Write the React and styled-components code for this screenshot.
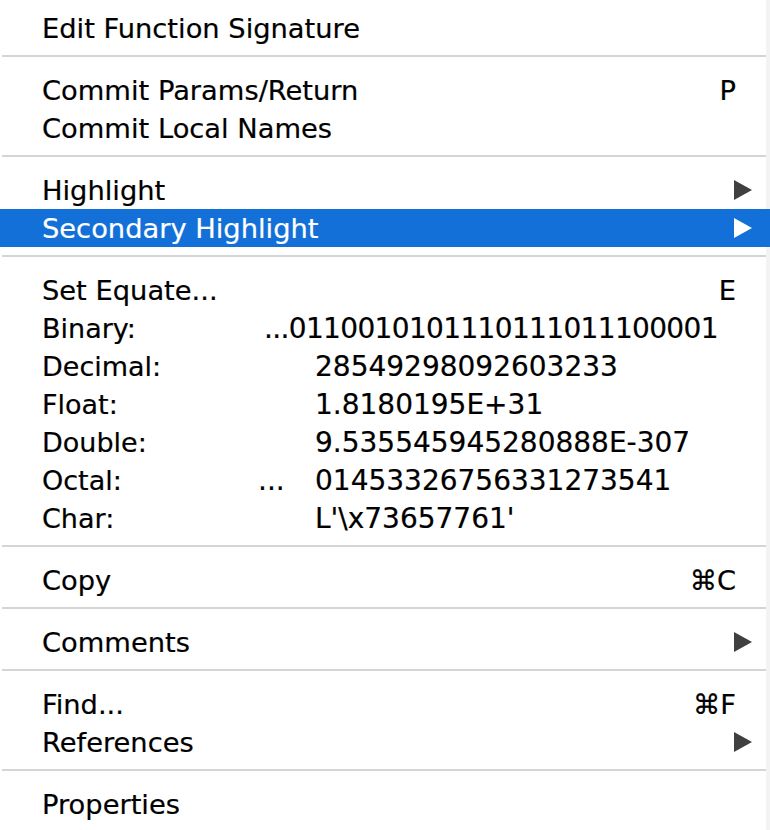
import React from "react";
import styled, { createGlobalStyle } from "styled-components";

const GlobalStyle = createGlobalStyle`
  html, body { margin: 0; padding: 0; background: #ffffff; }
  body {
    font-family: "DejaVu Sans", "Liberation Sans", sans-serif;
    -webkit-text-stroke: 0.2px currentColor;
  }
`;

const Menu = styled.div`
  min-height: 830px;
  padding-top: 9px;
  box-sizing: border-box;
  background: linear-gradient(to right, #ffffff calc(100% - 4px), #f3f3f3 0);
  color: #000;
`;

const Item = styled.div`
  display: flex;
  align-items: center;
  height: 38px;
  padding: 0 18px 0 42px;
  background: ${(p) => (p.$active ? "#1270d8" : "transparent")};
  color: ${(p) => (p.$active ? "#ffffff" : "#000000")};
  font-size: 27.3px;
  white-space: nowrap;
`;

const Label = styled.span`
  flex: 1;
`;

const Shortcut = styled.span`
  margin-right: 16px;
  font-size: 27.3px;
`;

const Arrow = styled.svg`
  width: 18px;
  height: 20px;
  display: block;
  fill: ${(p) => (p.$active ? "#ffffff" : "#404040")};
`;

const DataRow = styled.div`
  display: grid;
  grid-template-columns: 273px 1fr;
  align-items: center;
  height: 38px;
  padding-left: 42px;
  white-space: nowrap;
`;

const DataLabel = styled.span`
  font-size: 27px;
`;

const Value = styled.span`
  font-size: 28px;
  margin-left: ${(p) => p.$shift || 0}px;
  letter-spacing: ${(p) => p.$tight || 0}px;
`;

const Prefix = styled.span`
  display: inline-block;
  width: 57px;
  margin-left: -57px;
`;

const Separator = styled.div`
  height: 2px;
  margin: 8px 4px 14px 2px;
  background: #d5d5d5;
`;

const SubArrow = ({ active }) => (
  <Arrow $active={active} viewBox="0 0 18 20">
    <polygon points="0,0 18,10 0,20" />
  </Arrow>
);

const Entry = ({ label, shortcut, submenu, active }) => (
  <Item $active={active}>
    <Label>{label}</Label>
    {shortcut && <Shortcut>{shortcut}</Shortcut>}
    {submenu && <SubArrow active={active} />}
  </Item>
);

const values = [
  { label: "Binary:", value: "...0110010101110111011100001", shift: -51, tight: -0.65 },
  { label: "Decimal:", value: "28549298092603233" },
  { label: "Float:", value: "1.8180195E+31" },
  { label: "Double:", value: "9.535545945280888E-307" },
  { label: "Octal:", value: "01453326756331273541", prefix: "..." },
  { label: "Char:", value: "L'\\x73657761'" },
];

export default function App() {
  return (
    <>
      <GlobalStyle />
      <Menu>
        <Entry label="Edit Function Signature" />
        <Separator />
        <Entry label="Commit Params/Return" shortcut="P" />
        <Entry label="Commit Local Names" />
        <Separator />
        <Entry label="Highlight" submenu />
        <Entry label="Secondary Highlight" submenu active />
        <Separator />
        <Entry label="Set Equate..." shortcut="E" />
        {values.map((v) => (
          <DataRow key={v.label}>
            <DataLabel>{v.label}</DataLabel>
            <Value $shift={v.shift} $tight={v.tight}>
              {v.prefix && <Prefix>{v.prefix}</Prefix>}
              {v.value}
            </Value>
          </DataRow>
        ))}
        <Separator />
        <Entry label="Copy" shortcut="⌘C" />
        <Separator />
        <Entry label="Comments" submenu />
        <Separator />
        <Entry label="Find..." shortcut="⌘F" />
        <Entry label="References" submenu />
        <Separator />
        <Entry label="Properties" />
      </Menu>
    </>
  );
}
